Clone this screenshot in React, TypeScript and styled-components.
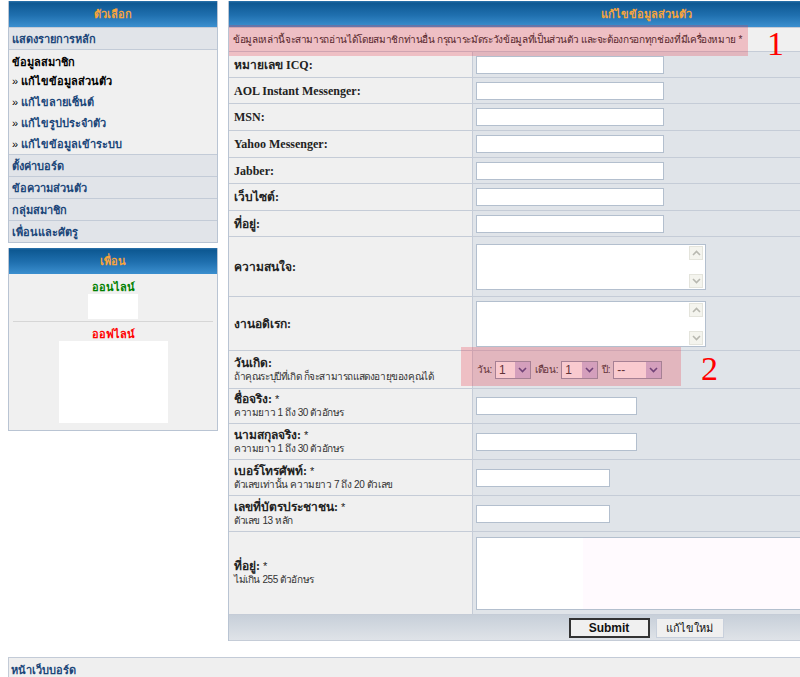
import React from 'react';
import styled, { createGlobalStyle } from 'styled-components';

const GlobalStyle = createGlobalStyle`
  html, body {
    margin: 0;
    padding: 0;
    background: #ffffff;
    overflow: hidden;
  }
  body {
    font-family: Tahoma, "Liberation Sans", "Noto Sans", sans-serif;
    font-size: 11px;
    color: #000;
  }
`;

const Page = styled.div`
  width: 1062px;
  padding: 1px 0 0 8px;
`;

const Columns = styled.div`
  display: flex;
  align-items: flex-start;
  gap: 10px;
`;

const Sidebar = styled.div`
  width: 210px;
  display: flex;
  flex-direction: column;
  gap: 5px;
`;

const Box = styled.div`
  border: 1px solid #b9c4d3;
  border-top: none;
  background: #f0f0f0;
`;

const Header = styled.div`
  height: 26px;
  display: flex;
  align-items: center;
  justify-content: center;
  background: linear-gradient(#2d75ae 0px, #0d5892 2px, #1f6fae 14px, #3b8fcf 26px);
  color: #f8a43c;
  font-weight: bold;
  font-size: 11px;
`;

const NavRow = styled.div`
  height: 21px;
  display: flex;
  align-items: center;
  padding-left: 3px;
  background: #e1e4e9;
  border-top: 1px solid #c3cbd7;
  color: #1b4679;
  font-weight: bold;
`;

const Group = styled.div`
  border-top: 1px solid #c3cbd7;
  background: #f0f0f0;
  padding: 4px 0 4px 3px;
  height: 96px;
  display: flex;
  flex-direction: column;
`;

const GroupTitle = styled.div`
  height: 17px;
  line-height: 17px;
  font-weight: bold;
`;

const GroupLink = styled.div<{ $active?: boolean }>`
  height: 21px;
  line-height: 21px;
  font-weight: bold;
  color: ${({ $active }) => ($active ? '#000' : '#1b4679')};

  span {
    font-weight: normal;
    color: #000;
    margin-right: 3px;
  }

  &:first-of-type {
    height: 17px;
    line-height: 17px;
  }
`;

const FriendsBody = styled.div`
  height: 152px;
  padding: 4px 4px 0;
  display: flex;
  flex-direction: column;
  align-items: center;
`;

const FriendTitle = styled.div<{ $color: string }>`
  color: ${({ $color }) => $color};
  font-weight: bold;
  height: 14px;
  line-height: 14px;
  margin-top: 2px;
`;

const FriendList = styled.div<{ $w: number; $h: number }>`
  width: ${({ $w }) => $w}px;
  height: ${({ $h }) => $h}px;
  background: #fff;
`;

const Separator = styled.div`
  align-self: stretch;
  border-top: 1px solid #d6d6d6;
  margin: 2px 0 3px;
`;

const Main = styled.div`
  position: relative;
  width: 834px;
  border-left: 1px solid #b9c4d3;
`;

const FormGrid = styled.div`
  display: grid;
  grid-template-columns: 243px 1fr;
  gap: 1px;
  background: #c5ccd7;
  padding-top: 1px;
`;

const Notice = styled.div`
  grid-column: 1 / 3;
  height: 23px;
  display: flex;
  align-items: center;
  padding-left: 4px;
  background: #f0f0f0;
  color: #222;
  font-size: 10px;
  letter-spacing: -0.35px;
  white-space: nowrap;
`;

const LabelCell = styled.div<{ $h: number }>`
  height: ${({ $h }) => $h - 1}px;
  background: #f0f0f0;
  padding-left: 5px;
  display: flex;
  flex-direction: column;
  justify-content: center;
`;

const LabelText = styled.div`
  font-family: "Liberation Serif", Tahoma, serif;
  font-weight: bold;
  font-size: 12px;
  color: #222;
  line-height: 14px;

  small {
    font-family: "Liberation Sans", sans-serif;
    font-weight: normal;
    font-size: 11px;
  }
`;

const Hint = styled.div`
  color: #333;
  line-height: 14px;
  font-size: 10px;
  letter-spacing: -0.4px;
  white-space: nowrap;
`;

const InputCell = styled.div<{ $h: number }>`
  height: ${({ $h }) => $h - 1}px;
  background: #e0e4e9;
  padding-left: 3px;
  display: flex;
  align-items: center;
`;

const TextInput = styled.div<{ $w: number }>`
  width: ${({ $w }) => $w}px;
  height: 16px;
  background: #fff;
  border: 1px solid #b3bfce;
`;

const TextArea = styled.div<{ $w: number; $h: number; $tint?: boolean }>`
  width: ${({ $w }) => $w}px;
  height: ${({ $h }) => $h}px;
  background: ${({ $tint }) => ($tint ? 'linear-gradient(90deg, #fff 0 106px, #fffafe 106px)' : '#fff')};
  border: 1px solid #b3bfce;
  display: flex;
  justify-content: flex-end;
`;

const ScrollBar = styled.div`
  width: 15px;
  display: flex;
  flex-direction: column;
  justify-content: space-between;
  padding: 1px 1px 1px 0;
`;

const ScrollButton = styled.div`
  width: 14px;
  height: 14px;
  background: #f4f4ee;
  border: 1px solid #e4e4dc;
  box-sizing: border-box;
  display: flex;
  align-items: center;
  justify-content: center;
`;

const DateRow = styled.div`
  display: flex;
  align-items: center;
  gap: 3px;
  color: #333;
  padding-left: 1px;
  font-size: 10px;
  letter-spacing: -0.3px;
`;

const Select = styled.div<{ $w: number }>`
  width: ${({ $w }) => $w - 5}px;
  height: 16px;
  border: 1px solid #8f9bb0;
  background: #fff;
  display: flex;
  align-items: center;
  justify-content: space-between;
  padding-left: 3px;
  font-size: 12px;
  letter-spacing: 0;
  margin-right: 1px;
  box-sizing: content-box;
`;

const SelectArrow = styled.div`
  width: 15px;
  height: 16px;
  background: #cdc6e6;
  display: flex;
  align-items: center;
  justify-content: center;
`;

const Footer = styled.div`
  grid-column: 1 / 3;
  height: 25px;
  background: linear-gradient(#c7cfd9, #dfe3e8);
  display: flex;
  align-items: center;
  justify-content: center;
  gap: 6px;
  border-bottom: 1px solid #c5ccd7;
`;

const Button = styled.div<{ $primary?: boolean }>`
  height: ${({ $primary }) => ($primary ? 16 : 18)}px;
  width: ${({ $primary }) => ($primary ? 77 : 66)}px;
  border: ${({ $primary }) => ($primary ? '2px solid #333' : '1px solid #c8d0dc')};
  background: #f0f0f0;
  display: flex;
  align-items: center;
  justify-content: center;
  font-family: "Liberation Sans", sans-serif;
  font-weight: ${({ $primary }) => ($primary ? 'bold' : 'normal')};
  font-size: ${({ $primary }) => ($primary ? 12 : 11)}px;
  color: #111;
`;

const Mark = styled.div<{ $x: number; $y: number; $w: number; $h: number }>`
  position: absolute;
  left: ${({ $x }) => $x}px;
  top: ${({ $y }) => $y}px;
  width: ${({ $w }) => $w}px;
  height: ${({ $h }) => $h}px;
  background: rgba(232, 50, 70, 0.26);
  pointer-events: none;
`;

const MarkNumber = styled.div<{ $x: number; $y: number }>`
  position: absolute;
  left: ${({ $x }) => $x}px;
  top: ${({ $y }) => $y}px;
  font-family: "Liberation Serif", serif;
  font-size: 34px;
  line-height: 30px;
  color: #f00;
`;

const BottomBar = styled.div`
  margin-top: 16px;
  height: 24px;
  border: 1px solid #c3cbd7;
  border-bottom: none;
  background: #efefef;
  display: flex;
  align-items: center;
  padding-left: 2px;
  color: #1b4679;
  font-weight: bold;
`;

const Chevron = ({ up, color }: { up?: boolean; color: string }) => (
  <svg width="9" height="6" viewBox="0 0 9 6">
    <path
      d={up ? 'M1 5 L4.5 1.5 L8 5' : 'M1 1 L4.5 4.5 L8 1'}
      fill="none"
      stroke={color}
      strokeWidth="1.6"
    />
  </svg>
);

const FakeTextArea = ({ w, h, scroll = true, tint }: { w: number; h: number; scroll?: boolean; tint?: boolean }) => (
  <TextArea $w={w} $h={h} $tint={tint}>
    {scroll && (
      <ScrollBar>
        <ScrollButton><Chevron up color="#b8b8b0" /></ScrollButton>
        <ScrollButton><Chevron color="#b8b8b0" /></ScrollButton>
      </ScrollBar>
    )}
  </TextArea>
);

const FakeSelect = ({ w, value }: { w: number; value: string }) => (
  <Select $w={w}>
    {value}
    <SelectArrow><Chevron color="#4a4a8a" /></SelectArrow>
  </Select>
);

type Row = { label: string; hint?: string; h: number; field: React.ReactNode; required?: boolean };

const rows: Row[] = [
  { label: 'หมายเลข ICQ:', h: 26, field: <TextInput $w={186} /> },
  { label: 'AOL Instant Messenger:', h: 26, field: <TextInput $w={186} /> },
  { label: 'MSN:', h: 27, field: <TextInput $w={186} /> },
  { label: 'Yahoo Messenger:', h: 27, field: <TextInput $w={186} /> },
  { label: 'Jabber:', h: 26, field: <TextInput $w={186} /> },
  { label: 'เว็บไซต์:', h: 27, field: <TextInput $w={186} /> },
  { label: 'ที่อยู่:', h: 26, field: <TextInput $w={186} /> },
  { label: 'ความสนใจ:', h: 60, field: <FakeTextArea w={228} h={44} /> },
  { label: 'งานอดิเรก:', h: 54, field: <FakeTextArea w={228} h={44} /> },
  {
    label: 'วันเกิด:',
    hint: 'ถ้าคุณระบุปีที่เกิด ก็จะสามารถแสดงอายุของคุณได้',
    h: 38,
    field: (
      <DateRow>
        วัน: <FakeSelect w={36} value="1" />
        เดือน: <FakeSelect w={37} value="1" />
        ปี: <FakeSelect w={49} value="--" />
      </DateRow>
    ),
  },
  { label: 'ชื่อจริง:', hint: 'ความยาว 1 ถึง 30 ตัวอักษร', h: 35, required: true, field: <TextInput $w={159} /> },
  { label: 'นามสกุลจริง:', hint: 'ความยาว 1 ถึง 30 ตัวอักษร', h: 36, required: true, field: <TextInput $w={159} /> },
  { label: 'เบอร์โทรศัพท์:', hint: 'ตัวเลขเท่านั้น ความยาว 7 ถึง 20 ตัวเลข', h: 36, required: true, field: <TextInput $w={132} /> },
  { label: 'เลขที่บัตรประชาชน:', hint: 'ตัวเลข 13 หลัก', h: 36, required: true, field: <TextInput $w={132} /> },
  { label: 'ที่อยู่:', hint: 'ไม่เกิน 255 ตัวอักษร', h: 83, required: true, field: <FakeTextArea w={340} h={71} scroll={false} tint /> },
];

function App(): JSX.Element {
  return (
    <Page>
      <GlobalStyle />
      <Columns>
        <Sidebar>
          <Box>
            <Header>ตัวเลือก</Header>
            <NavRow>แสดงรายการหลัก</NavRow>
            <Group>
              <GroupTitle>ข้อมูลสมาชิก</GroupTitle>
              <GroupLink $active><span>»</span>แก้ไขข้อมูลส่วนตัว</GroupLink>
              <GroupLink><span>»</span>แก้ไขลายเซ็นต์</GroupLink>
              <GroupLink><span>»</span>แก้ไขรูปประจำตัว</GroupLink>
              <GroupLink><span>»</span>แก้ไขข้อมูลเข้าระบบ</GroupLink>
            </Group>
            <NavRow>ตั้งค่าบอร์ด</NavRow>
            <NavRow>ข้อความส่วนตัว</NavRow>
            <NavRow>กลุ่มสมาชิก</NavRow>
            <NavRow>เพื่อนและศัตรู</NavRow>
          </Box>
          <Box>
            <Header>เพื่อน</Header>
            <FriendsBody>
              <FriendTitle $color="#008000">ออนไลน์</FriendTitle>
              <FriendList $w={50} $h={25} />
              <Separator />
              <FriendTitle $color="#ff0000">ออฟไลน์</FriendTitle>
              <FriendList $w={109} $h={82} />
            </FriendsBody>
          </Box>
        </Sidebar>

        <Main>
          <Header>แก้ไขข้อมูลส่วนตัว</Header>
          <FormGrid>
            <Notice>
              ข้อมูลเหล่านี้จะสามารถอ่านได้โดยสมาชิกท่านอื่น กรุณาระมัดระวังข้อมูลที่เป็นส่วนตัว และจะต้องกรอกทุกช่องที่มีเครื่องหมาย *
            </Notice>
            {rows.map((row) => (
              <React.Fragment key={row.label + row.h}>
                <LabelCell $h={row.h}>
                  <LabelText>
                    {row.label}
                    {row.required && <small> *</small>}
                  </LabelText>
                  {row.hint && <Hint>{row.hint}</Hint>}
                </LabelCell>
                <InputCell $h={row.h}>{row.field}</InputCell>
              </React.Fragment>
            ))}
            <Footer>
              <Button $primary>Submit</Button>
              <Button>แก้ไขใหม่</Button>
            </Footer>
          </FormGrid>
          <Mark $x={0} $y={24} $w={519} $h={31} />
          <MarkNumber $x={538} $y={28}>1</MarkNumber>
          <Mark $x={232} $y={346} $w={220} $h={39} />
          <MarkNumber $x={472} $y={353}>2</MarkNumber>
        </Main>
      </Columns>
      <BottomBar>หน้าเว็บบอร์ด</BottomBar>
    </Page>
  );
}

export default App;
